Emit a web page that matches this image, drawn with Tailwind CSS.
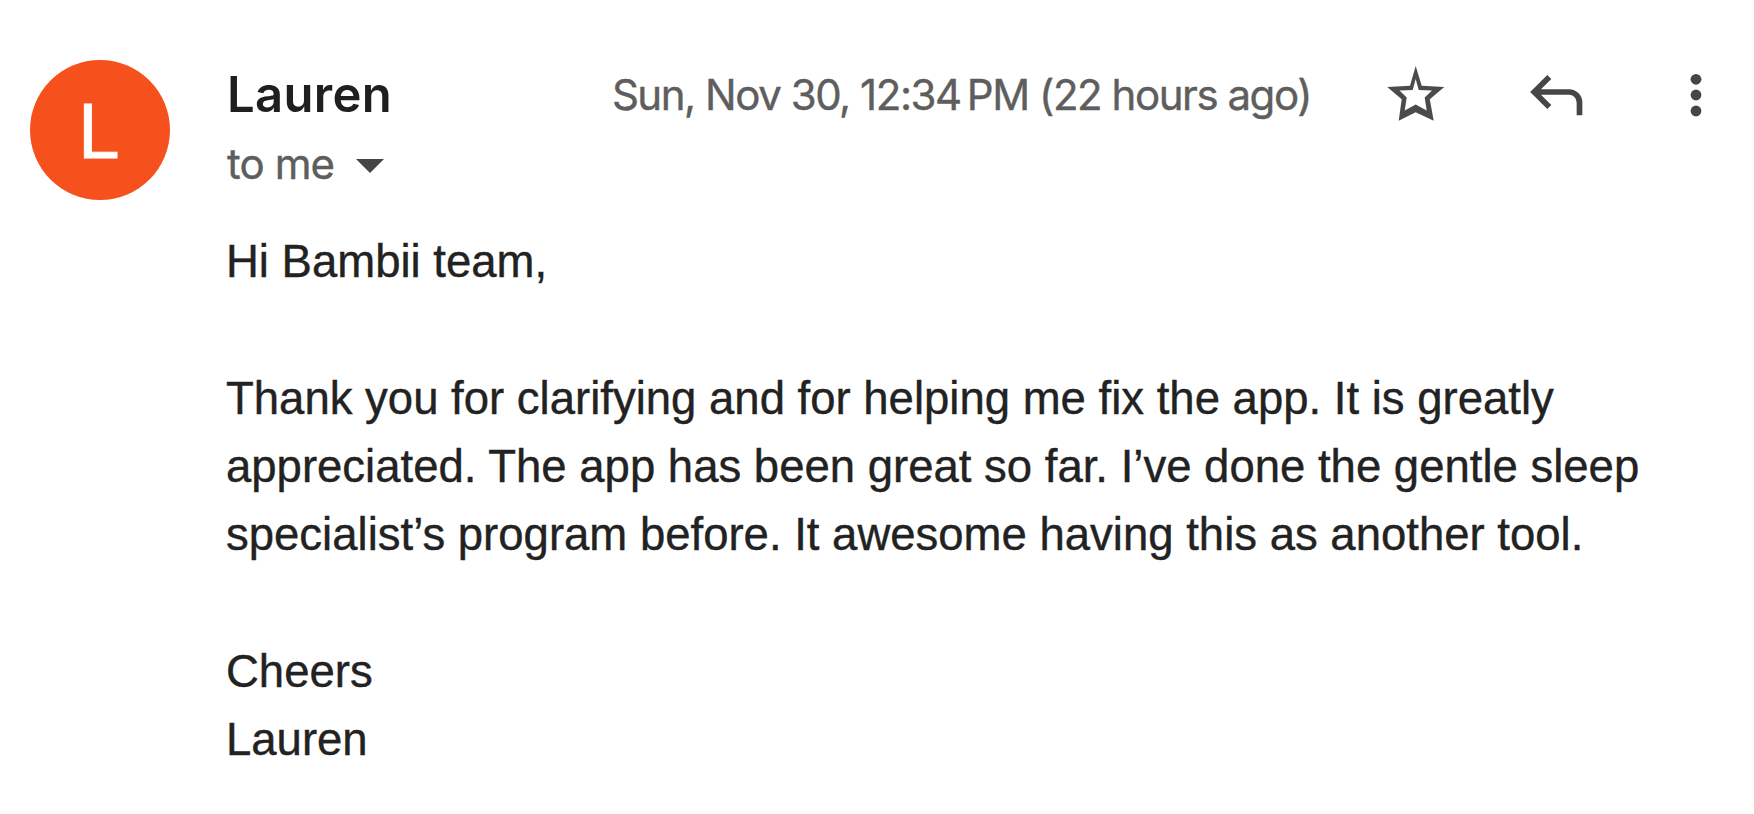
<!DOCTYPE html>
<html lang="en">
<head>
  <meta charset="UTF-8" />
  <meta name="viewport" content="width=device-width, initial-scale=1.0" />
  <title>Lauren</title>
  <script src="https://cdn.jsdelivr.net/npm/@tailwindcss/browser@4"></script>
</head>
<body class="bg-white min-h-screen overflow-hidden">

  <div class="flex pl-[30px] pt-[60px]">

    <!-- Avatar -->
    <div class="w-[140px] h-[140px] shrink-0 rounded-full bg-[#f6511d] text-white flex items-center justify-center pt-1 pr-[3px] font-['Roboto',sans-serif] text-[76px] leading-none [-webkit-text-stroke:0.8px]">L</div>

    <div class="flex-1 ml-[56px]">

      <!-- Header -->
      <div class="flex items-center h-[70px] font-['Inter',sans-serif]">
        <h1 class="pl-px text-[49px] leading-[70px] font-semibold tracking-[0.3px] text-[#1f1f1f]">Lauren</h1>
        <span class="ml-auto text-[42px] leading-[70px] whitespace-nowrap text-[#5e5e5e] tracking-[-1.46px] [-webkit-text-stroke:0.4px] pb-px">Sun, Nov 30, 12:34&#8239;PM (22 hours ago)</span>
        <button class="ml-[70px] w-[70px] h-[70px]" aria-label="Star">
          <svg viewBox="1381 60 70 70" class="w-[70px] h-[70px]" fill="#4a4c4c" fill-rule="evenodd">
            <path d="M1415.700 66L1421.700 85.700L1444.300 87L1429.800 99.300L1433.700 120.700L1415.700 112.300L1398.700 120.700L1401.700 99.300L1387.200 87L1410 85.700ZM1415.700 79L1412.700 90L1399.500 90.500L1406.700 97.500L1404.700 110.500L1415.700 104.500L1426.700 110.500L1424.700 97.500L1432 90.500L1418.700 90Z" />
          </svg>
        </button>
        <button class="ml-[70px] w-[70px] h-[70px]" aria-label="Reply">
          <svg viewBox="1521 60 70 70" class="w-[70px] h-[70px]" fill="none" stroke="#444746" stroke-width="5.700">
            <path d="M1549.300 77L1534.200 92L1549.300 107M1534.200 92H1569A10.500 10.500 0 0 1 1579.500 102.500V115.300" />
          </svg>
        </button>
        <button class="ml-[70px] mr-[23px] w-[70px] h-[70px]" aria-label="More">
          <svg viewBox="1661 60 70 70" class="w-[70px] h-[70px]" fill="#444746">
            <circle cx="1696" cy="79.300" r="5.400" />
            <circle cx="1696" cy="95" r="5.400" />
            <circle cx="1696" cy="111" r="5.400" />
          </svg>
        </button>
      </div>

      <!-- Recipient -->
      <div class="flex items-center h-[70px] font-['Inter',sans-serif] text-[42px] text-[#5e5e5e]">
        <span class="pb-[4px] pl-px tracking-[-0.9px] [-webkit-text-stroke:0.4px]">to me</span>
        <svg viewBox="0 0 28 14" class="ml-[22px] mt-[2px] w-[28px] h-[14px]" fill="#444746"><path d="M0 0H28L14 14Z" /></svg>
      </div>

      <!-- Message -->
      <div class="mt-[28px] font-['Liberation_Sans',Arial,sans-serif] text-[45.5px] leading-[68.25px] text-[#222222] whitespace-nowrap [-webkit-text-stroke:0.4px]">
        <p>Hi Bambii team,</p>
        <br />
        <p>Thank you for clarifying and for helping me fix the app. It is greatly<br />appreciated. The app has been great so far. I’ve done the gentle sleep<br />specialist’s program before. It awesome having this as another tool.</p>
        <br />
        <p>Cheers<br />Lauren</p>
      </div>
    </div>
  </div>

</body>
</html>
